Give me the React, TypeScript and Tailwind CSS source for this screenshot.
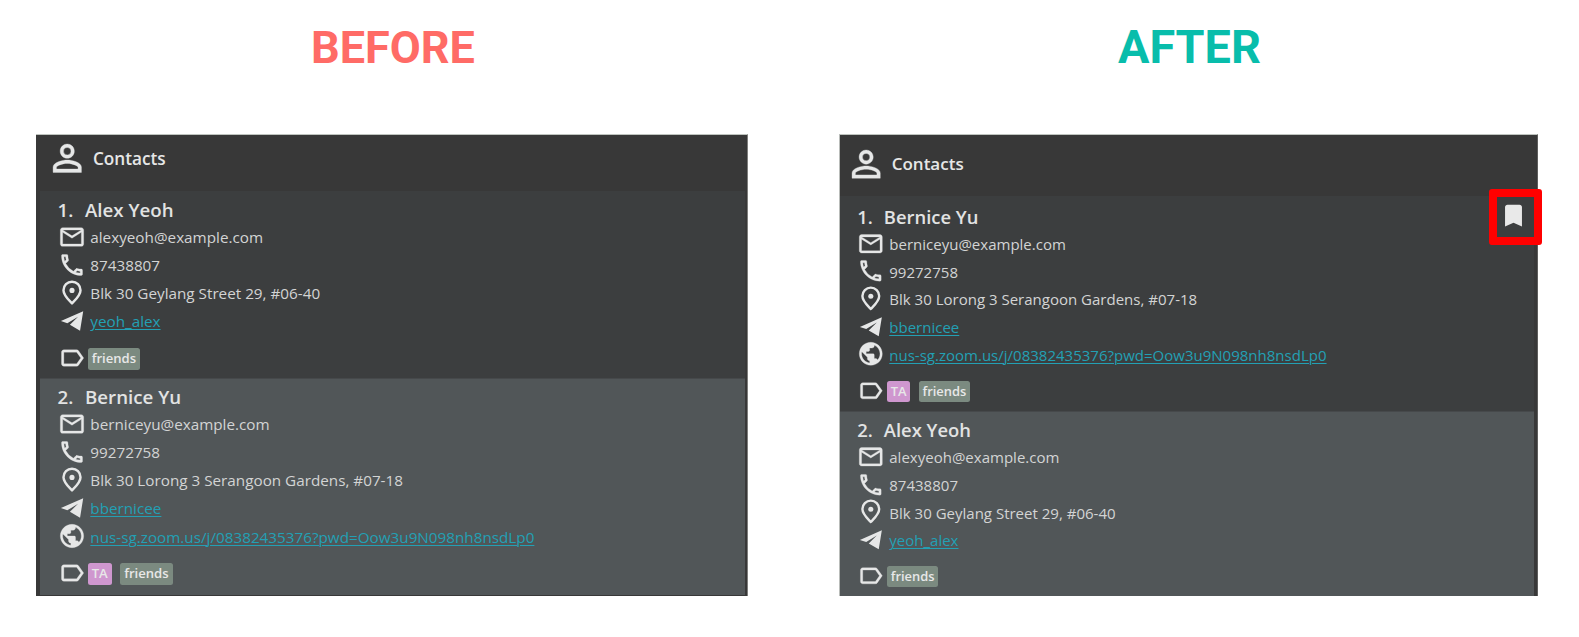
import type { ReactNode } from "react";
import { MdBookmark, MdLabelOutline, MdMailOutline, MdOutlinePhone, MdPersonOutline, MdPublic } from "react-icons/md";

type Contact = {
  name: string;
  email: string;
  phone: string;
  address: string;
  telegram: string;
  meeting?: string;
  tags: string[];
};

const alex: Contact = {
  name: "Alex Yeoh",
  email: "alexyeoh@example.com",
  phone: "87438807",
  address: "Blk 30 Geylang Street 29, #06-40",
  telegram: "yeoh_alex",
  tags: ["friends"],
};

const bernice: Contact = {
  name: "Bernice Yu",
  email: "berniceyu@example.com",
  phone: "99272758",
  address: "Blk 30 Lorong 3 Serangoon Gardens, #07-18",
  telegram: "bbernicee",
  meeting: "nus-sg.zoom.us/j/08382435376?pwd=Oow3u9N098nh8nsdLp0",
  tags: ["TA", "friends"],
};

type Size = {
  line: string;
  icon: string;
  iconGap: string;
  name: string;
  nameIndex: string;
  pill: string;
  pillPad: string;
};

const regular: Size = {
  line: "h-[28.1px] text-[15.25px]",
  icon: "size-[28px]",
  iconGap: "mr-[4.8px]",
  name: "h-[26.6px] text-[18.7px]",
  nameIndex: "w-[27.5px]",
  pill: "h-[21.5px] text-[13.1px]",
  pillPad: "px-[3.9px]",
};

const compact: Size = {
  line: "h-[27.7px] text-[15.02px]",
  icon: "size-[27.6px]",
  iconGap: "mr-[4.4px]",
  name: "h-[27.3px] text-[18.4px]",
  nameIndex: "w-[26.5px]",
  pill: "h-[21.2px] text-[12.9px]",
  pillPad: "px-[3.6px]",
};

const outline = "size-full [&_path[fill=none]]:stroke-none";

function PinIcon() {
  return (
    <svg viewBox="0 0 24 24" className="size-full" fill="none" stroke="currentColor" strokeWidth="2.1">
      <path d="M12 20.9C8.2 16.9 4.7 13.9 4.7 9.6a7.3 7.3 0 0 1 14.6 0c0 4.3-3.5 7.3-7.3 11.3Z" strokeLinejoin="round" />
      <circle cx="12" cy="9.8" r="2.2" fill="currentColor" stroke="none" />
    </svg>
  );
}

function PlaneIcon() {
  return (
    <svg viewBox="0 0 24 24" className="size-full" fill="currentColor">
      <path d="M21.6 3.7 18.9 20.3 10.2 15.3 17.2 8.3 8 14 2.5 12.1Z" />
    </svg>
  );
}

function Line({ size, icon, link, children }: { size: Size; icon: ReactNode; link?: boolean; children: string }) {
  return (
    <div className={`flex items-center ${size.line}`}>
      <span className={`-mt-[1.4px] shrink-0 text-[#e6e7e7] ${size.iconGap} ${size.icon}`}>{icon}</span>
      {link ? (
        <a className="text-[#23a0b4] underline decoration-1 underline-offset-2">{children}</a>
      ) : (
        <span className="text-[#d3d4d4]">{children}</span>
      )}
    </div>
  );
}

function Row({ index, contact, size, className, tagGap }: { index: number; contact: Contact; size: Size; className: string; tagGap: string }) {
  return (
    <div className={className}>
      <div className={`flex items-center font-semibold text-[#e2e3e3] ${size.name}`}>
        <span className={size.nameIndex}>{index}.</span>
        <span>{contact.name}</span>
      </div>
      <Line size={size} icon={<MdMailOutline className={outline} strokeWidth={0.25} />}>{contact.email}</Line>
      <Line size={size} icon={<MdOutlinePhone className={outline} strokeWidth={0.25} />}>{contact.phone}</Line>
      <Line size={size} icon={<PinIcon />}>{contact.address}</Line>
      <Line size={size} icon={<PlaneIcon />} link>{contact.telegram}</Line>
      {contact.meeting && (
        <Line size={size} icon={<MdPublic className={outline} strokeWidth={0.25} />} link>{contact.meeting}</Line>
      )}
      <div className={`flex items-center ${size.pill} ${tagGap}`}>
        <span className={`-mt-[1.6px] mr-[2.3px] shrink-0 text-[#e6e7e7] ${size.icon}`}>
          <MdLabelOutline className={outline} strokeWidth={0.25} />
        </span>
        <div className="flex h-full gap-[8.7px]">
          {contact.tags.map((tag) => (
            <span
              key={tag}
              className={`flex h-full items-center rounded-[2.5px] font-semibold text-[#e8e8e8] ${size.pillPad} ${tag === "TA" ? "bg-[#cf97cf]" : "bg-[#7b8a80]"}`}
            >
              {tag}
            </span>
          ))}
        </div>
      </div>
    </div>
  );
}

function Header({ className, iconClass, labelClass }: { className: string; iconClass: string; labelClass: string }) {
  return (
    <div className={`flex items-start text-[#e6e7e7] ${className}`}>
      <MdPersonOutline className={`shrink-0 [&_path[fill=none]]:stroke-none ${iconClass}`} strokeWidth={0.2} />
      <span className={`font-semibold leading-[24px] ${labelClass}`}>Contacts</span>
    </div>
  );
}

export default function App() {
  return (
    <main className="flex h-[637px] w-[1579px] overflow-hidden bg-white pl-[36px] font-['Open_Sans','Noto_Sans',sans-serif] whitespace-nowrap">
      <section className="w-[712px]">
        <h1 className="h-[134px] pt-[20px] pl-[275px] font-['Roboto',sans-serif] text-[45px] leading-[56px] font-bold text-[#ff6b66]">BEFORE</h1>
        <div className="flex h-[462px] flex-col border-t border-r border-t-[#bfc4bf] border-r-[#7e7e7c] bg-[#383838] pr-[2.5px] pl-[4px]">
          <Header className="h-[56px] pl-[6px]" iconClass="mt-[2px] size-[42.5px]" labelClass="mt-[12px] ml-[4.4px] text-[17.2px]" />
          <Row index={1} contact={alex} size={regular} className="h-[187px] bg-[#3c3e3f] pt-[5.8px] pl-[17.5px]" tagGap="mt-[12.4px]" />
          <Row index={2} contact={bernice} size={regular} className="h-[217px] border-t border-[#46494b] bg-[#515658] pt-[5px] pl-[17.5px]" tagGap="mt-[12.2px]" />
        </div>
      </section>
      <section className="ml-[91px] w-[699px]">
        <h1 className="h-[134px] pt-[19px] pl-[279px] font-['Roboto',sans-serif] text-[46.8px] leading-[57px] font-bold text-[#08bdab]">AFTER</h1>
        <div className="relative flex h-[462px] flex-col border-x border-t border-t-[#bfc4bf] border-r-[#5e5e5d] border-l-[#b9bcb9] bg-[#383838] pr-[3px]">
          <Header className="h-[61px] pl-[5px]" iconClass="mt-[8px] size-[42.3px]" labelClass="mt-[17px] ml-[4.4px] text-[17px]" />
          <Row index={1} contact={bernice} size={compact} className="h-[215px] bg-[#3c3e3f] pt-[7.1px] pl-[17.3px]" tagGap="mt-[12px]" />
          <Row index={2} contact={alex} size={compact} className="flex-1 border-t border-[#46494b] bg-[#515658] pt-[4.4px] pl-[17.3px]" tagGap="mt-[11.8px]" />
          <div className="absolute top-[54px] -right-[5px] flex h-[56px] w-[53px] items-center justify-center rounded-[3px] border-8 border-[#ff0000] bg-[#3c3e3f]">
            <MdBookmark className="-mt-[3px] -ml-[4px] size-[29px] shrink-0 text-[#e9e9e9]" />
          </div>
        </div>
      </section>
    </main>
  );
}
